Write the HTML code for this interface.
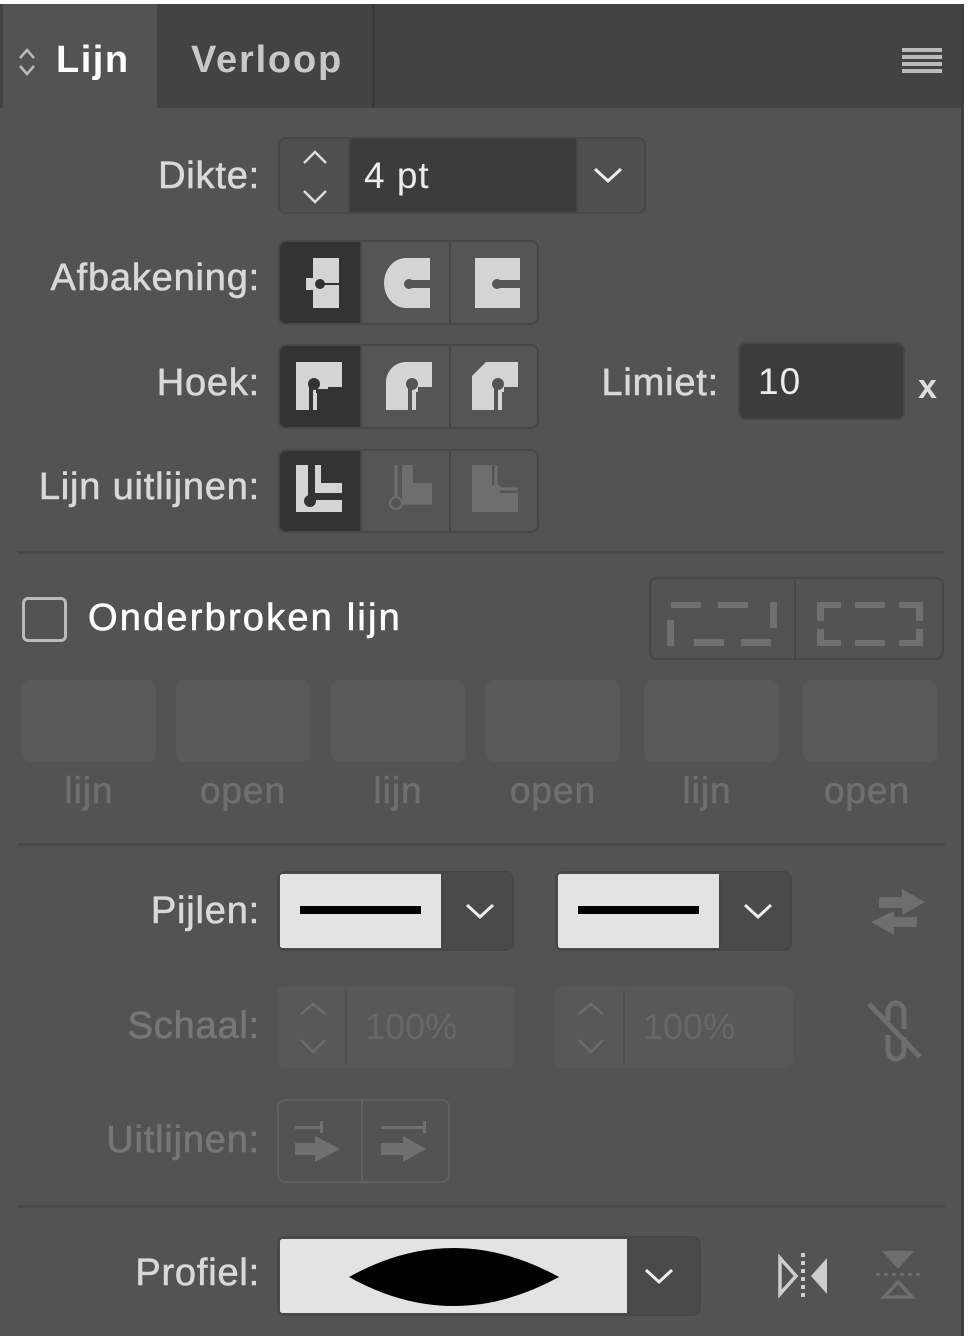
<!DOCTYPE html>
<html><head><meta charset="utf-8"><style>
*{margin:0;padding:0;box-sizing:border-box}
body{width:968px;height:1340px;background:#fff;position:relative;overflow:hidden;font-family:"Liberation Sans",sans-serif}
#p{position:absolute;left:0;top:4px;width:964px;height:1332px;background:#535353;border-right:3px solid #3e3e3e}
.a{position:absolute}
.lbl{position:absolute;right:701px;font-size:38px;color:#d8d8d8;text-align:right;white-space:nowrap;letter-spacing:0.8px;-webkit-text-stroke:0.6px currentColor}
.box{position:absolute;border:2px solid #474747;border-radius:8px;overflow:hidden}
.cell{position:absolute;top:0;bottom:0;border-right:2px solid #474747}
.sep{position:absolute;left:18px;width:927px;height:3px;background:#4a4a4a}
.ph{position:absolute;top:680px;width:134px;height:82px;background:#595959;border-radius:8px}
.pl{position:absolute;top:770px;font-size:37px;color:#6f6f6f;text-align:center;width:134px;letter-spacing:1px;-webkit-text-stroke:0.6px currentColor}
</style></head><body>
<div id="p">
<div class="a" style="left:0;top:0;width:961px;height:104px;background:#434343"></div>
<div class="a" style="left:3px;top:0;width:154px;height:110px;background:#535353"></div>
<div class="a" style="left:372px;top:0;width:3px;height:104px;background:#3a3a3a"></div>
<svg class="a" style="left:16px;top:40px" width="22" height="36" viewBox="0 0 22 36"><path d="M4 14 L11 6 L18 14 M4 22 L11 30 L18 22" stroke="#bbb" stroke-width="2.5" fill="none"/></svg>
<div class="a" style="left:56px;top:35px;font-size:38px;font-weight:bold;color:#fff;letter-spacing:1.5px">Lijn</div>
<div class="a" style="left:191px;top:35px;font-size:38px;font-weight:bold;color:#c8c8c8;letter-spacing:1.8px">Verloop</div>
<div class="a" style="left:902px;top:44px;width:40px;height:4px;background:#bbb;box-shadow:0 7px 0 #bbb,0 14px 0 #bbb,0 21px 0 #bbb"></div>

<div class="lbl" style="top:151px">Dikte:</div>
<div class="box" style="left:278px;top:133px;width:368px;height:77px;background:#4f4f4f">
 <div class="cell" style="left:0;width:70px"></div>
 <div class="a" style="left:70px;top:0;width:228px;height:73px;background:#3c3c3c;border-right:2px solid #474747"></div>
 <svg class="a" style="left:20px;top:8px" width="30" height="60"><path d="M4 16 L15 5 L26 16 M4 44 L15 55 L26 44" stroke="#ddd" stroke-width="2.5" fill="none"/></svg>
 <div class="a" style="left:84px;top:16px;font-size:37px;color:#ececec;letter-spacing:1px">4 pt</div>
 <svg class="a" style="left:312px;top:26px" width="32" height="20"><path d="M3 4 L16 16 L29 4" stroke="#eee" stroke-width="3" fill="none"/></svg>
</div>

<div class="lbl" style="top:253px">Afbakening:</div>
<div class="box" style="left:278px;top:236px;width:261px;height:85px;background:#555">
 <div class="cell" style="left:0;width:82px;background:#333"></div>
 <div class="cell" style="left:82px;width:89px"></div>
 <svg class="a" style="left:22px;top:16px" width="44" height="52"><path d="M11 0 H37 V25 H20 V27 H37 V50 H11 V32 H4 V20 H11 Z" fill="#d4d4d4"/><circle cx="18" cy="26" r="5" fill="#333"/></svg>
 <svg class="a" style="left:104px;top:16px" width="48" height="52"><path d="M22 0 H46 V22 H26 V30 H46 V50 H22 A22 25 0 0 1 22 0 Z" fill="#d4d4d4"/><circle cx="25" cy="26" r="5" fill="#555"/></svg>
 <svg class="a" style="left:192px;top:16px" width="50" height="52"><path d="M3 0 H48 V22 H26 V30 H48 V50 H3 Z" fill="#d4d4d4"/><circle cx="25" cy="26" r="5" fill="#555"/></svg>
</div>

<div class="lbl" style="top:358px">Hoek:</div>
<div class="box" style="left:278px;top:340px;width:261px;height:85px;background:#555">
 <div class="cell" style="left:0;width:82px;background:#333"></div>
 <div class="cell" style="left:82px;width:89px"></div>
 <svg class="a" style="left:14px;top:16px" width="50" height="50"><path d="M2 0 H48 V25 H34 V30 H48 V48 H2 Z" fill="#d4d4d4"/><path d="M17 22 V48" stroke="#333" stroke-width="4"/><rect x="23" y="28" width="25" height="20" fill="#333"/><rect x="22" y="27" width="12" height="4" fill="#333"/><circle cx="20" cy="22" r="6" fill="#333"/></svg>
 <svg class="a" style="left:104px;top:16px" width="50" height="50"><path d="M22 0 H48 V25 H34 V30 H48 V48 H2 V20 A20 20 0 0 1 22 0 Z" fill="#d4d4d4"/><path d="M26 22 V48" stroke="#555" stroke-width="4"/><rect x="32" y="30" width="16" height="18" fill="#555"/><circle cx="28" cy="22" r="6" fill="#555"/></svg>
 <svg class="a" style="left:190px;top:16px" width="50" height="50"><path d="M16 0 H48 V25 H34 V30 H48 V48 H2 V14 Z" fill="#d4d4d4"/><path d="M26 22 V48" stroke="#555" stroke-width="4"/><rect x="32" y="30" width="16" height="18" fill="#555"/><circle cx="28" cy="22" r="6" fill="#555"/></svg>
</div>
<div class="lbl" style="top:358px;right:242px">Limiet:</div>
<div class="box" style="left:738px;top:338px;width:167px;height:78px;background:#3c3c3c">
 <div class="a" style="left:18px;top:17px;font-size:37px;color:#ececec;letter-spacing:1px">10</div>
</div>
<div class="a" style="left:918px;top:364px;font-size:34px;font-weight:bold;color:#ddd">x</div>

<div class="lbl" style="top:462px">Lijn uitlijnen:</div>
<div class="box" style="left:278px;top:445px;width:261px;height:84px;background:#555">
 <div class="cell" style="left:0;width:82px;background:#333"></div>
 <div class="cell" style="left:82px;width:89px"></div>
 <svg class="a" style="left:14px;top:14px" width="50" height="52"><path d="M2 0 H14 V35 H48 V47 H2 Z M21 0 H27 V18 H48 V28 H21 Z" fill="#d4d4d4"/><circle cx="16" cy="36" r="6" fill="#333"/></svg>
 <svg class="a" style="left:104px;top:14px" width="50" height="52"><path d="M18 0 H29 V18 H48 V38 H18 Z" fill="#6e6e6e"/><path d="M12 0 V38 H48" stroke="#6e6e6e" stroke-width="3" fill="none"/><circle cx="12" cy="38" r="6" fill="#555" stroke="#6e6e6e" stroke-width="2"/></svg>
 <svg class="a" style="left:190px;top:14px" width="50" height="52"><path d="M2 0 H22 V28 H48 V47 H2 Z" fill="#6e6e6e"/><path d="M26 0 V24 H48" stroke="#6e6e6e" stroke-width="3" fill="none"/><circle cx="26" cy="24" r="5" fill="#6e6e6e"/></svg>
</div>

<div class="sep" style="top:547px"></div>

<div class="a" style="left:22px;top:593px;width:45px;height:45px;border:3px solid #bbb;border-radius:6px"></div>
<div class="a" style="left:88px;top:593px;font-size:38px;color:#fff;letter-spacing:2.2px;-webkit-text-stroke:0.6px #fff">Onderbroken lijn</div>
<div class="box" style="left:649px;top:573px;width:295px;height:83px">
 <div class="cell" style="left:0;width:145px"></div>
 <svg class="a" style="left:16px;top:17px" width="110" height="50"><g fill="#707070"><rect x="4" y="6" width="30" height="6"/><rect x="51" y="6" width="30" height="6"/><rect x="103" y="6" width="7" height="26"/><rect x="0" y="24" width="7" height="26"/><rect x="27" y="43" width="30" height="7"/><rect x="74" y="43" width="30" height="7"/></g></svg>
 <svg class="a" style="left:166px;top:17px" width="110" height="50"><g fill="#707070"><path d="M0 6 H24 V12 H7 V25 H0 Z M0 33 H7 V44 H24 V50 H0 Z M106 6 H82 V12 H99 V25 H106 Z M106 33 H99 V44 H82 V50 H106 Z"/><rect x="38" y="6" width="30" height="6"/><rect x="38" y="44" width="30" height="6"/></g></svg>
</div>

<div class="ph" style="left:22px;top:676px"></div><div class="ph" style="left:176px;top:676px"></div><div class="ph" style="left:331px;top:676px"></div><div class="ph" style="left:486px;top:676px"></div><div class="ph" style="left:644px;top:676px"></div><div class="ph" style="left:803px;top:676px"></div>
<div class="pl" style="left:22px;top:766px">lijn</div><div class="pl" style="left:176px;top:766px">open</div><div class="pl" style="left:331px;top:766px">lijn</div><div class="pl" style="left:486px;top:766px">open</div><div class="pl" style="left:640px;top:766px">lijn</div><div class="pl" style="left:800px;top:766px">open</div>

<div class="sep" style="top:839px"></div>

<div class="lbl" style="top:886px">Pijlen:</div>
<div class="box" style="left:277px;top:867px;width:237px;height:80px;background:#4a4a4a">
 <div class="a" style="left:1px;top:1px;width:163px;height:74px;background:#e3e3e3;border-right:2px solid #474747"></div>
 <div class="a" style="left:21px;top:33px;width:121px;height:8px;background:#000"></div>
 <svg class="a" style="left:185px;top:28px" width="32" height="20"><path d="M3 4 L16 16 L29 4" stroke="#eee" stroke-width="3" fill="none"/></svg>
</div>
<div class="box" style="left:555px;top:867px;width:237px;height:80px;background:#4a4a4a">
 <div class="a" style="left:1px;top:1px;width:163px;height:74px;background:#e3e3e3;border-right:2px solid #474747"></div>
 <div class="a" style="left:21px;top:33px;width:121px;height:8px;background:#000"></div>
 <svg class="a" style="left:185px;top:28px" width="32" height="20"><path d="M3 4 L16 16 L29 4" stroke="#eee" stroke-width="3" fill="none"/></svg>
</div>
<svg class="a" style="left:870px;top:885px" width="56" height="50"><g fill="#6e6e6e"><path d="M9 8 H32 V0 L55 13 L32 26 V19 H9 Z"/><path d="M47 28 H24 V22 L1 33 L24 46 V38 H47 Z"/></g></svg>

<div class="lbl" style="top:1001px;color:#777">Schaal:</div>
<div class="a" style="left:277px;top:982px;width:238px;height:82px;background:#585858;border-radius:8px"><div class="a" style="left:68px;top:4px;width:2px;height:74px;background:#4f4f4f"></div>
 <svg class="a" style="left:20px;top:14px" width="34" height="60"><path d="M4 14 L16 4 L28 14 M4 40 L16 52 L28 40" stroke="#6c6c6c" stroke-width="2.5" fill="none"/></svg>
 <div class="a" style="left:88px;top:20px;font-size:36px;color:#686868">100%</div></div>
<div class="a" style="left:555px;top:982px;width:238px;height:82px;background:#585858;border-radius:8px"><div class="a" style="left:68px;top:4px;width:2px;height:74px;background:#4f4f4f"></div>
 <svg class="a" style="left:20px;top:14px" width="34" height="60"><path d="M4 14 L16 4 L28 14 M4 40 L16 52 L28 40" stroke="#6c6c6c" stroke-width="2.5" fill="none"/></svg>
 <div class="a" style="left:88px;top:20px;font-size:36px;color:#686868">100%</div></div>
<svg class="a" style="left:866px;top:995px" width="60" height="65"><g stroke="#6e6e6e" stroke-width="5" fill="none"><path d="M22 22 V12 A8 8 0 0 1 38 12 V30 M38 38 V52 A8 8 0 0 1 22 52 V36"/><path d="M3 5 L54 58"/></g></svg>

<div class="lbl" style="top:1115px;color:#777">Uitlijnen:</div>
<div class="a" style="left:277px;top:1095px;width:173px;height:84px;border:2px solid #606060;border-radius:8px"><div class="a" style="left:82px;top:0;width:2px;height:80px;background:#606060"></div>
 <svg class="a" style="left:16px;top:20px" width="50" height="44"><g fill="#707070"><rect x="0" y="5" width="26" height="3"/><rect x="25" y="0" width="3" height="12"/><path d="M0 22 H20 V15 L45 28 L20 41 V34 H0 Z"/></g></svg>
 <svg class="a" style="left:102px;top:20px" width="50" height="44"><g fill="#707070"><rect x="0" y="5" width="44" height="3"/><rect x="42" y="0" width="3" height="12"/><path d="M0 22 H22 V15 L45 28 L22 41 V34 H0 Z"/></g></svg>
</div>

<div class="sep" style="top:1201px"></div>

<div class="lbl" style="top:1248px">Profiel:</div>
<div class="box" style="left:277px;top:1232px;width:424px;height:80px;background:#4a4a4a">
 <div class="a" style="left:1px;top:1px;width:349px;height:74px;background:#e3e3e3;border-right:2px solid #474747"></div>
 <svg class="a" style="left:68px;top:7px" width="216" height="64"><path d="M2 32 Q106 -26 212 32 Q106 90 2 32 Z" fill="#000"/></svg>
 <svg class="a" style="left:364px;top:28px" width="32" height="20"><path d="M3 4 L16 16 L29 4" stroke="#eee" stroke-width="3" fill="none"/></svg>
</div>
<svg class="a" style="left:776px;top:1248px" width="56" height="52"><path d="M4 6 L20 24 L4 42 Z" fill="none" stroke="#ccc" stroke-width="3.5"/><path d="M51 6 L35 24 L51 42 Z" fill="#ccc"/><g fill="#ccc"><rect x="25" y="1" width="4" height="4"/><rect x="25" y="9" width="4" height="4"/><rect x="25" y="17" width="4" height="4"/><rect x="25" y="25" width="4" height="4"/><rect x="25" y="33" width="4" height="4"/><rect x="25" y="41" width="4" height="4"/></g></svg>
<svg class="a" style="left:876px;top:1245px" width="46" height="52"><path d="M6 2 H38 L22 20 Z" fill="#6e6e6e"/><path d="M8 48 H36 L22 33 Z" fill="none" stroke="#6e6e6e" stroke-width="3.5"/><g fill="#6e6e6e"><rect x="0" y="24" width="4" height="3"/><rect x="8" y="24" width="4" height="3"/><rect x="16" y="24" width="4" height="3"/><rect x="24" y="24" width="4" height="3"/><rect x="32" y="24" width="4" height="3"/><rect x="40" y="24" width="4" height="3"/></g></svg>
</div>
</body></html>
